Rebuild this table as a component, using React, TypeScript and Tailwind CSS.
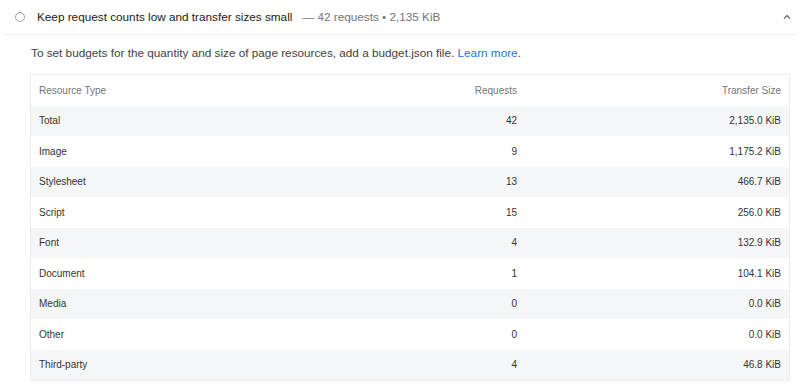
const rows = [
  { type: 'Total', requests: 42, size: '2,135.0 KiB' },
  { type: 'Image', requests: 9, size: '1,175.2 KiB' },
  { type: 'Stylesheet', requests: 13, size: '466.7 KiB' },
  { type: 'Script', requests: 15, size: '256.0 KiB' },
  { type: 'Font', requests: 4, size: '132.9 KiB' },
  { type: 'Document', requests: 1, size: '104.1 KiB' },
  { type: 'Media', requests: 0, size: '0.0 KiB' },
  { type: 'Other', requests: 0, size: '0.0 KiB' },
  { type: 'Third-party', requests: 4, size: '46.8 KiB' },
];

export default function App() {
  return (
    <div className="w-[800px] h-[384px] overflow-hidden bg-white font-['Liberation_Sans',Arial,sans-serif] text-[#212121]">
      {/* audit header */}
      <div className="mx-[3px] h-[35px] flex items-center border-b border-[#efefef] pl-[12px] pr-[6px]">
        <span className="w-[10px] h-[10px] rounded-full border-[1.5px] border-[#9e9e9e]" />
        <span className="ml-[12px] text-[11.75px]">Keep request counts low and transfer sizes small</span>
        <span className="ml-[10px] text-[11.75px] text-[#757575]">— 42 requests • 2,135 KiB</span>
        <svg className="ml-auto" width="8" height="8" viewBox="0 0 8 8" fill="none">
          <path d="M1 5.5 L4 2.5 L7 5.5" stroke="#616161" strokeWidth="1.1" />
        </svg>
      </div>

      <p className="mt-[10px] ml-[31px] text-[11.75px] leading-[16px] text-[#424242]">
        To set budgets for the quantity and size of page resources, add a budget.json file.{' '}
        <a className="text-[#1a73e8]">Learn more</a>.
      </p>

      <div className="mt-[13px] ml-[30px] w-[760px] border border-[#ececec]">
        <div className="grid grid-cols-[1fr_230px_264px] h-[30.5px] items-center px-[8px] text-[10px] text-[#757575]">
          <span>Resource Type</span>
          <span className="text-right">Requests</span>
          <span className="text-right">Transfer Size</span>
        </div>
        {rows.map((r, i) => (
          <div
            key={r.type}
            className={`grid grid-cols-[1fr_230px_264px] h-[30.5px] items-center px-[8px] text-[10px] text-[#333333] ${i % 2 === 0 ? 'bg-[#f5f6f7]' : 'bg-white'}`}
          >
            <span>{r.type}</span>
            <span className="text-right">{r.requests}</span>
            <span className="text-right">{r.size}</span>
          </div>
        ))}
      </div>
    </div>
  );
}
